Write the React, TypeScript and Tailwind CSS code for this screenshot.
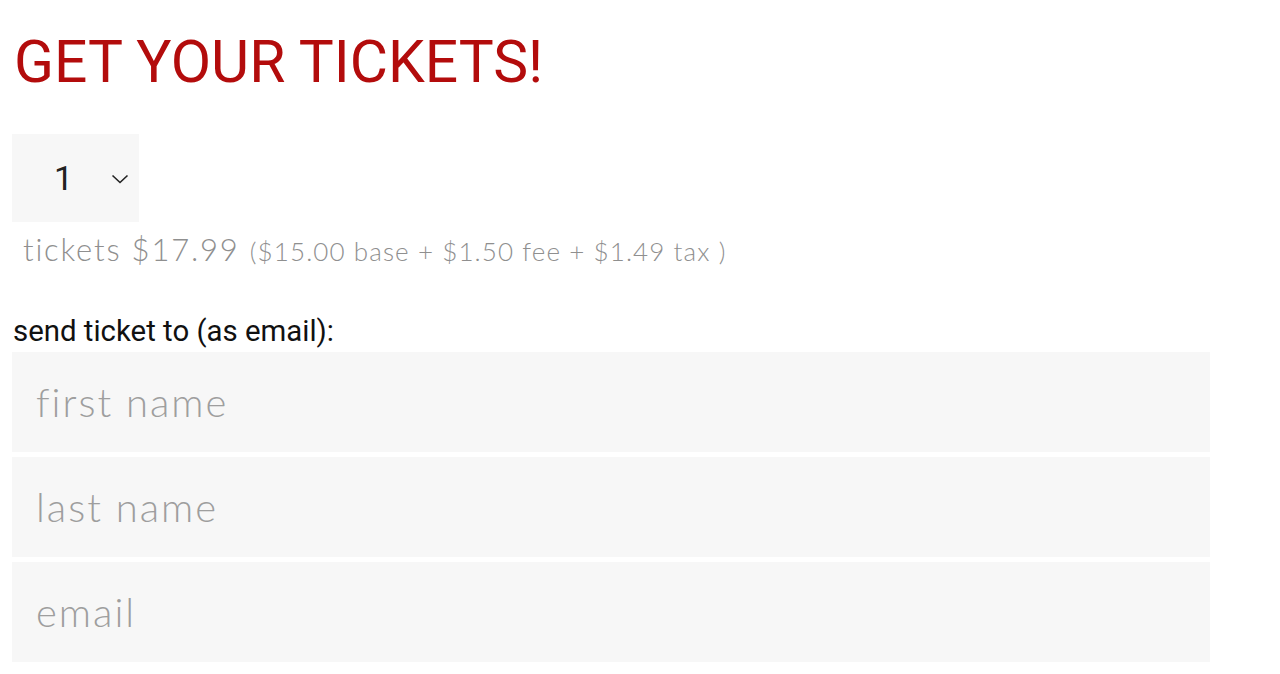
import React from "react";

const Chevron = () => (
  <svg width="18" height="10" viewBox="0 0 18 10" fill="none">
    <path d="M1.5 1.5 L9 8.5 L16.5 1.5" stroke="#222" strokeWidth="1.6" />
  </svg>
);

const Field = ({ placeholder }: { placeholder: string }) => (
  <input
    type="text"
    placeholder={placeholder}
    className="h-[100px] w-[1198px] bg-[#f7f7f7] px-6 text-[40px] tracking-[2px] text-[#333] outline-none placeholder:text-[#9e9e9e] font-['Lato',sans-serif] font-light"
  />
);

export default function App() {
  return (
    <div className="min-h-[674px] bg-white pl-3 font-['Roboto',sans-serif]">
      <h1 className="pt-[33px] pl-[2px] text-[58.7px] leading-none text-[#b30c0c]">
        GET YOUR TICKETS!
      </h1>

      <div className="mt-[42px] flex h-[88px] w-[127px] items-center bg-[#f7f7f7]">
        <span className="ml-[42px] text-[34px] leading-none text-[#222]">1</span>
        <span className="ml-[38px] mt-[2px]">
          <Chevron />
        </span>
      </div>

      <p className="mt-[4px] pl-[11px] font-['Lato',sans-serif] font-light text-[#8f8f8f]">
        <span className="text-[31px] tracking-[1.8px]">tickets $17.99 </span>
        <span className="text-[26px] tracking-[1.1px]">($15.00 base + $1.50 fee + $1.49 tax )</span>
      </p>

      <p className="mt-[42px] pl-[1px] text-[29.4px] leading-[35px] text-[#111]">
        send ticket to (as email):
      </p>

      <div className="mt-[3px] flex flex-col gap-[5px]">
        <Field placeholder="first name" />
        <Field placeholder="last name" />
        <Field placeholder="email" />
      </div>
    </div>
  );
}
